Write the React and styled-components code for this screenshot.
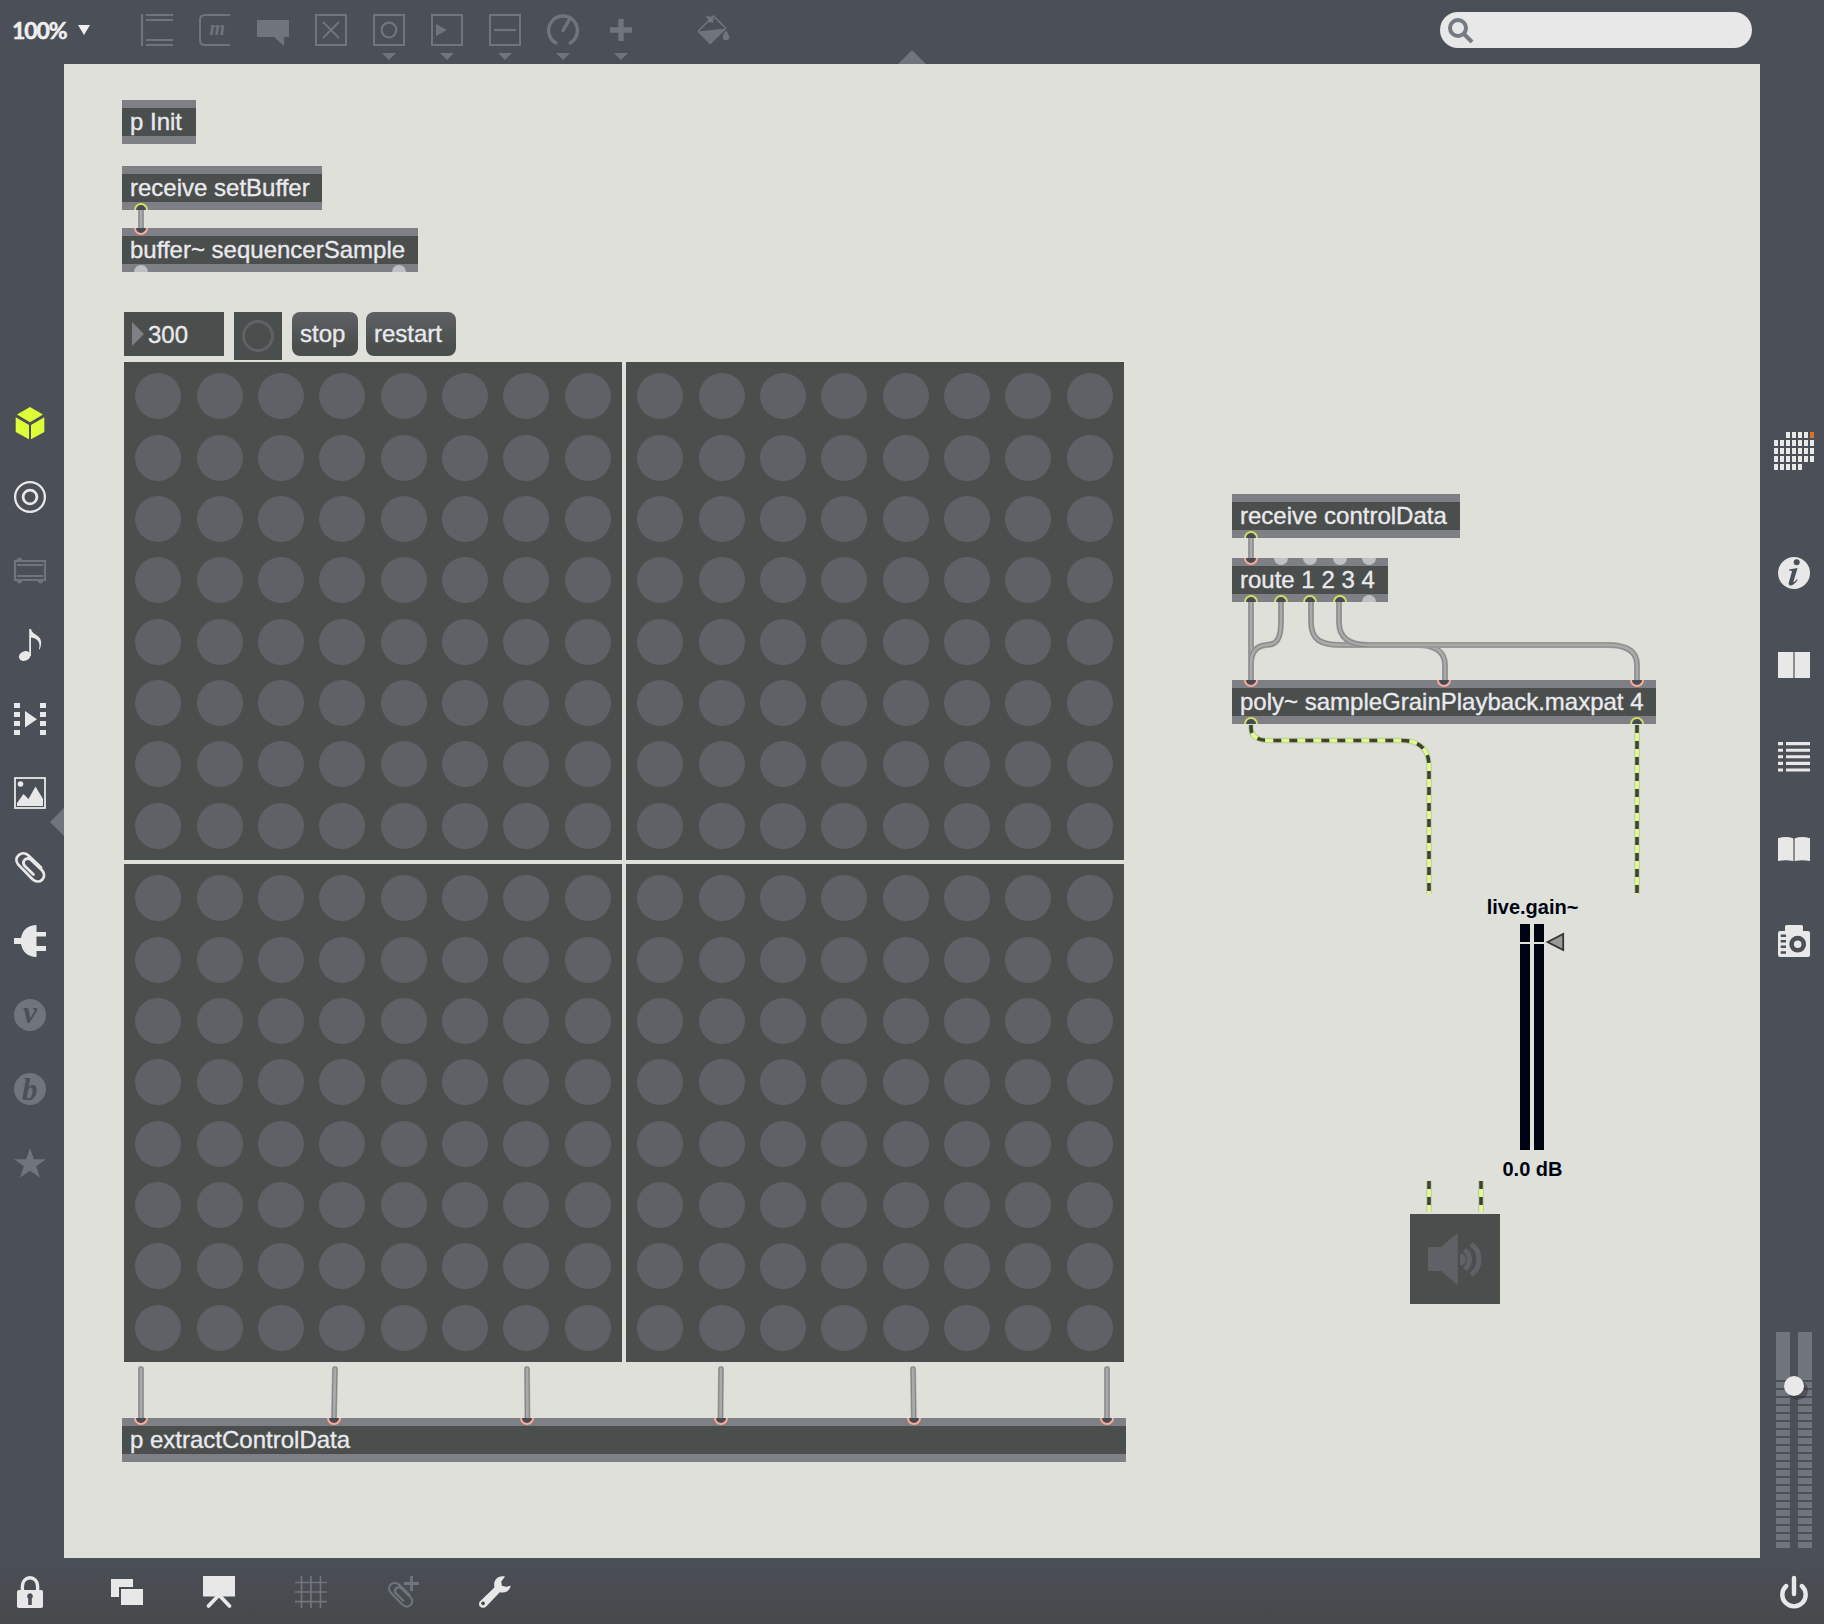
import React from "react";
import styled, { createGlobalStyle, css } from "styled-components";

const c = {
  frame: "#4b4f57",
  canvas: "#dfe0da",
  box: "#4a4e4c",
  edge: "#7f8085",
  dot: "#606166",
  text: "#e9e9ee",
  icon: "#e8e8e8",
  dim: "#70747d",
  inlet: "#ffa898",
  outlet: "#d5dc66",
  idle: "#bfc0c3",
};

const SIDE = 64;

const GlobalStyle = createGlobalStyle`
  *, *::before, *::after { box-sizing: border-box; }
  body { margin: 0; font-family: "Liberation Sans", Arial, sans-serif; }
`;

/* ---------- window frame ---------- */

const Window = styled.div`
  display: grid;
  grid-template: 64px 1494px 66px / 64px 1696px 64px;
  width: 1824px;
  height: 1624px;
  overflow: hidden;
  background: ${c.frame};
`;

const TopBar = styled.header`
  grid-column: 1 / -1;
  position: relative;
  display: flex;
  align-items: flex-start;
  padding: 12px 72px 0 12px;
`;

const Zoom = styled.div`
  display: flex;
  align-items: center;
  gap: 12px;
  width: 129px;
  height: 36px;
  color: #efefef;
  font: bold 23px/36px Lato, sans-serif;
  letter-spacing: -1.1px;
  -webkit-text-stroke: 0.5px currentColor;
`;

const Tools = styled.nav`
  display: flex;
  gap: 26px;
  padding-top: 2px;
  color: ${c.dim};
`;

const Tool = styled.span`
  display: flex;
  flex-direction: column;
  align-items: center;
  gap: 7px;
  margin-left: ${(p) => p.$offset || 0}px;
`;

const Caret = styled.i`
  width: 0;
  height: 0;
  border: ${(p) => p.$half}px solid transparent;
  border-top: ${(p) => p.$drop}px solid currentColor;
  border-bottom: 0;
`;

const Search = styled.label`
  display: flex;
  align-items: center;
  width: 312px;
  height: 36px;
  margin-left: auto;
  padding-left: 7px;
  border-radius: 18px;
  background: #e8e8e8;
  color: #757b83;
`;

const DrawerHandle = styled.i`
  position: absolute;
  background: ${c.dim};
  ${(p) =>
    p.$side === "top"
      ? css`
          left: 898px;
          bottom: 0;
          width: 28px;
          height: 14px;
          clip-path: polygon(50% 0, 100% 100%, 0 100%);
        `
      : css`
          right: 0;
          top: 744px;
          width: 14px;
          height: 28px;
          clip-path: polygon(0 50%, 100% 0, 100% 100%);
        `}
`;

const LeftBar = styled.aside`
  position: relative;
  display: flex;
  flex-direction: column;
  gap: 42px;
  padding: 343px 0 0 14px;
  color: ${c.icon};
`;

const RightBar = styled.aside`
  display: flex;
  flex-direction: column;
  align-items: center;
  padding: 368px 0 10px 4px;
  color: ${c.icon};
`;

const RightTools = styled.nav`
  display: flex;
  flex-direction: column;
  gap: 60px;
  margin-top: 87px;
`;

const BottomBar = styled.footer`
  grid-column: 1 / -1;
  display: flex;
  gap: 60px;
  padding: 18px 14px 0;
  background: linear-gradient(${c.frame}, #46494b);
  color: ${c.icon};
`;

const BottomItem = styled.span`
  display: flex;
  height: 32px;
  margin-left: ${(p) => p.$offset || 0};
  color: ${(p) => (p.$dim ? c.dim : "inherit")};
`;

const Monome = styled.div`
  display: grid;
  grid-template-columns: repeat(7, 4px);
  grid-auto-rows: 6px;
  gap: 2px;
`;

const MonomeCell = styled.i`
  background: ${(p) => p.$tone};
`;

const Volume = styled.div`
  position: relative;
  display: flex;
  gap: 8px;
  margin-top: auto;
`;

const VolumeTrack = styled.div`
  width: 14px;
  height: 216px;
  background: linear-gradient(${c.dim}, ${c.dim}) top / 100% 48px no-repeat,
    repeating-linear-gradient(${c.frame} 0 2px, ${c.dim} 2px 8px);
`;

const VolumeKnob = styled.i`
  position: absolute;
  left: 8px;
  top: 44px;
  width: 20px;
  height: 20px;
  border-radius: 50%;
  background: #e9e9e9;
  box-shadow: 4px 4px 0 rgba(45, 48, 52, 0.5);
`;

/* ---------- patcher canvas ---------- */

const Canvas = styled.main`
  position: relative;
  background: ${c.canvas};
`;

const Cords = styled.svg`
  position: absolute;
  inset: 0;
  pointer-events: none;
`;

const Node = styled.div`
  position: absolute;
  left: ${(p) => p.$x - SIDE}px;
  top: ${(p) => p.$y - SIDE}px;
`;

const ObjectBox = styled.div`
  position: relative;
  width: ${(p) => p.$w}px;
  height: 44px;
  padding: 0 8px;
  border: solid ${c.edge};
  border-width: 8px 0;
  background: ${c.box};
  color: ${c.text};
  font-size: 24px;
  line-height: 28px;
  white-space: nowrap;
  -webkit-text-stroke: 0.35px currentColor;
`;

const tones = { in: c.inlet, out: c.outlet, idle: c.idle };

const Port = styled.i`
  position: absolute;
  left: ${(p) => p.$at - 7}px;
  width: 14px;
  height: 7px;
  border: 2px solid ${(p) => tones[p.$tone]};
  background: ${(p) => (p.$tone === "idle" ? c.idle : "#454b54")};
  ${(p) =>
    p.$edge === "top"
      ? css`
          top: -8px;
          border-top: 0;
          border-radius: 0 0 7px 7px;
        `
      : css`
          bottom: -8px;
          border-bottom: 0;
          border-radius: 7px 7px 0 0;
        `}
`;

const Controls = styled.div`
  display: flex;
  align-items: flex-start;
  color: ${c.text};
  font-size: 24px;
  line-height: 43px;
  -webkit-text-stroke: 0.35px currentColor;
`;

const NumberBox = styled.div`
  display: flex;
  align-items: center;
  gap: 4px;
  width: 100px;
  height: 44px;
  padding-left: 8px;
  background: ${c.box};
`;

const NumberArrow = styled.i`
  width: 12px;
  height: 24px;
  background: ${c.edge};
  clip-path: polygon(0 0, 100% 50%, 0 100%);
`;

const Toggle = styled.div`
  display: grid;
  place-items: center;
  width: 48px;
  height: 48px;
  margin: 0 10px;
  background: ${c.box};

  &::after {
    content: "";
    width: 32px;
    height: 32px;
    border: 3px solid ${c.dot};
    border-radius: 50%;
  }
`;

const Message = styled.div`
  width: ${(p) => p.$w}px;
  height: 44px;
  margin-right: 8px;
  padding-left: 8px;
  border-radius: 8px;
  background: linear-gradient(#5f6064, ${c.box} 80%);
`;

const MatrixSet = styled.div`
  display: grid;
  grid-template-columns: 498px 498px;
  gap: 4px;
`;

const Matrix = styled.div`
  display: grid;
  grid-template: repeat(8, 1fr) / repeat(8, 1fr);
  place-items: center;
  height: 498px;
  padding: 3.75px;
  background: ${c.box};
`;

const Dot = styled.i`
  width: 46px;
  height: 46px;
  border-radius: 50%;
  background: ${c.dot};
`;

const Gain = styled.div`
  display: flex;
  flex-direction: column;
  align-items: center;
  width: 120px;
  color: #000412;
  font: bold 20px/24px "Liberation Sans", Arial, sans-serif;
`;

const GainLabel = styled.span`
  padding-left: 1px;
`;

const Meter = styled.div`
  position: relative;
  display: flex;
  gap: 4px;
  margin: 5px 0 7px;
`;

const MeterBar = styled.i`
  width: 10px;
  height: 226px;
  background: linear-gradient(#000412 18px, ${c.canvas} 18px 20px, #000412 20px);
`;

const MeterThumb = styled.svg`
  position: absolute;
  left: 25px;
  top: 7px;
`;

const Dac = styled.div`
  width: 90px;
  height: 90px;
  background: ${c.box};
`;

/* ---------- drawings ---------- */

const Glyph = ({ children, w = 32, h = 32, ...rest }) => (
  <svg width={w} height={h} viewBox={`0 0 ${w} ${h}`} fill="none" overflow="visible" {...rest}>
    {children}
  </svg>
);

const Square = () => <rect x="1" y="1" width="30" height="30" stroke="currentColor" strokeWidth="2" />;

const CLIP = "M27 16.6 14.2 4.2C7.5-1.5-1.5 6.8 4.3 13.6L18.5 28.3C25.5 34.5 34 26 28 19.3L17.2 9C12.5 5 7 10.5 10.8 15L19.5 23.6";

const toolIcons = [
  {
    art: <path d="M1 0v32M5 1h27M5 6h27M5 26h27M5 31h27" stroke="currentColor" strokeWidth="2.2" />,
  },
  {
    art: (
      <>
        <path d="M31 1H6Q1 1 1 6V26Q1 31 6 31H31" stroke="currentColor" strokeWidth="2" />
        <text x="10.5" y="21" fill="currentColor" fontFamily="Liberation Serif, serif" fontStyle="italic" fontWeight="bold" fontSize="20">m</text>
      </>
    ),
  },
  { art: <path d="M0 6H32V23H27V32L17 23H0z" fill="currentColor" /> },
  { art: <><Square /><path d="M8 8 24 24M24 8 8 24" stroke="currentColor" strokeWidth="2" /></> },
  { art: <><Square /><circle cx="16" cy="16" r="7.4" stroke="currentColor" strokeWidth="2.2" /></>, menu: true },
  { art: <><Square /><path d="M5 10 16 16 5 22z" fill="currentColor" /></>, menu: true },
  { art: <><Square /><path d="M5 16H27" stroke="currentColor" strokeWidth="2.2" /></>, menu: true },
  {
    art: <path d="M9 29A14.4 14.4 0 1 1 23 29M16 16.5 22.5 5.5" stroke="currentColor" strokeWidth="3.4" strokeLinecap="round" />,
    menu: true,
  },
  { art: <path d="M16 5V27M5 16H27" stroke="currentColor" strokeWidth="5.4" />, menu: true },
  {
    offset: 35,
    art: (
      <>
        <path d="M0 17.3 15.6 2 28 14.6" stroke="currentColor" strokeWidth="1.6" />
        <path d="M-.8 17.5 28.6 14.6 12.3 30.5zM28 16.5C30 19.5 31.3 21.5 31.3 23.2A3.3 3 0 0 1 24.7 23.2C24.7 21.5 26 19.5 28 16.5z" fill="currentColor" />
        <path d="M8.5 2 15 8.5M10 5.5 13 2.5M11 8 16 4.5" stroke="currentColor" strokeWidth="2" />
      </>
    ),
  },
];

const letterBadge = (ch, x, y) => (
  <>
    <circle cx="16" cy="16" r="16" fill={c.dim} />
    <text x={x} y={y} fill={c.frame} fontFamily="Liberation Serif, serif" fontStyle="italic" fontWeight="bold" fontSize="31">
      {ch}
    </text>
  </>
);

const leftIcons = [
  <path d="M16 0 29 7.5 16 15.2 3 7.5zM1.7 10.2 15 18V32.2L1.7 25zM30.3 10.2 17 18V32.2L30.3 25z" fill="#deff38" />,
  <g stroke="currentColor"><circle cx="16" cy="16" r="14.9" strokeWidth="2.3" /><circle cx="16" cy="16" r="6.9" strokeWidth="2.8" /></g>,
  <g stroke={c.dim} strokeWidth="2.2">
    <path d="M1 6H31V25H1zM3 10H29M3 21H29" />
    <path d="M3 5.5A2.5 2.5 0 0 1 8 5.5M3 25.5A2.5 2.5 0 0 0 8 25.5M24 25.5A2.5 2.5 0 0 0 29 25.5" fill={c.dim} strokeWidth="1" />
  </g>,
  <g fill="currentColor">
    <ellipse cx="10.7" cy="27" rx="6" ry="4.7" transform="rotate(-22 10.7 27)" />
    <path d="M15.2 0H17C17.5 3 20 4.5 23 6.5 28 9.5 28 15 25.7 20.5L25 20C26.5 15 25 9.5 17 8.5V27H15.2z" />
  </g>,
  <path d="M0 0h6v5H0zM0 9h6v5H0zM0 18h6v5H0zM0 27h6v5H0zM26 0h6v5h-6zM26 9h6v5h-6zM26 18h6v5h-6zM26 27h6v5h-6zM11 8 23 16.2 11 24.5z" fill="currentColor" />,
  <>
    <rect x="1" y="1" width="30" height="30" stroke="currentColor" strokeWidth="1.8" />
    <circle cx="6.5" cy="7" r="2.8" fill="currentColor" />
    <path d="M3 29V26L9.5 17 14.5 22 21.5 9.5 29 22V29z" fill="currentColor" />
  </>,
  <path d={CLIP} stroke="currentColor" strokeWidth="2.8" strokeLinecap="round" />,
  <path d="M0 13H7C8.5 5 14 0 22.5 0V7H32V11.5H22.5V21H32V26H22.5V32C14 32 8.5 27 7 19H0z" fill="currentColor" />,
  letterBadge("v", 9, 24),
  letterBadge("b", 8, 26.5),
  <path d="M16 1 19.8 12.2H32L22.2 19.3 26 30.6 16 23.7 6 30.6 9.8 19.3 0 12.2H12.2z" fill={c.dim} />,
];

const rightIcons = [
  <>
    <circle cx="16" cy="16" r="16" fill="currentColor" />
    <circle cx="18.7" cy="5.3" r="3" fill={c.frame} />
    <path d="M11 12.5 19.6 11 15.6 24C15.2 26 16.2 25.5 18.8 22.3L19.7 23C16 28.7 10.5 30.6 10.7 26L14 14.6Q14 13.5 11 13.6z" fill={c.frame} />
  </>,
  <>
    <path d="M0 3H15V29H0zM17 3H32V29H17z" fill="currentColor" />
    <path d="M16 3V29" stroke="#8b8d91" strokeWidth="2" />
  </>,
  <path d="M0 2.6H5M8 2.6H32M0 9.2H5M8 9.2H32M0 15.8H5M8 15.8H32M0 22.4H5M8 22.4H32M0 29H5M8 29H32" stroke="currentColor" strokeWidth="3.1" />,
  <>
    <path d="M0 5.3Q8 2.8 15 5.3V28Q8 26.5 0 28zM17 5.3Q24 2.8 32 5.3V28Q24 26.5 17 28z" fill="currentColor" />
    <path d="M16 5.5V28" stroke="#8b8d91" strokeWidth="2" />
  </>,
  <>
    <path d="M7 1.5Q7 0 8.5 0H23.5Q25 0 25 1.5V6H30Q32 6 32 8V30Q32 32 30 32H2Q0 32 0 30V8Q0 6 2 6H7z" fill="currentColor" />
    <circle cx="19.7" cy="19.2" r="6.1" stroke={c.frame} strokeWidth="4.6" />
    <path d="M2.7 10.7H8M2.7 16.2H8M2.7 21.8H8M2.7 27.4H8" stroke={c.frame} strokeWidth="2.5" />
  </>,
];

const bottomIcons = [
  {
    art: (
      <>
        <path d="M8.4 15V10a7.6 8.2 0 0 1 15.2 0v5" stroke="currentColor" strokeWidth="3.4" />
        <rect x="3" y="14" width="26" height="18" rx="1.8" fill="currentColor" />
        <path d="M16 17.3A3 3 0 0 1 17.8 22.6V29H14.2V22.6A3 3 0 0 1 16 17.3z" fill={c.frame} />
      </>
    ),
  },
  {
    offset: "5px",
    art: <path d="M0 3H22V11H8V21H0zM10 13H32V29H10z" fill="currentColor" />,
  },
  {
    art: (
      <>
        <path d="M0 0H32V20.5H0z" fill="currentColor" />
        <path d="M16 19 5.5 30M16 19 26.5 30" stroke="currentColor" strokeWidth="3.8" strokeLinecap="round" />
      </>
    ),
  },
  { dim: true, art: <path d="M6.5 0V32M16 0V32M25.5 0V32M0 6.5H32M0 16H32M0 25.7H32" stroke="currentColor" strokeWidth="1.7" /> },
  {
    dim: true,
    art: (
      <>
        <path d={CLIP} transform="translate(0 5) scale(.84)" stroke="currentColor" strokeWidth="2.5" strokeLinecap="round" />
        <path d="M24.5 0V15M17 7.5H32" stroke="currentColor" strokeWidth="2.8" />
      </>
    ),
  },
  {
    art: (
      <path
        fillRule="evenodd"
        d="M26 .6 22.3 5.5 22.9 9.8 27 10.8 31.7 9.8C30.5 15.6 25.5 17.5 20.8 16.2L7.2 30.4C3.2 34.2-2.7 29.5 1.4 25L15.4 11.4C14 4.5 18.5-1 26 .6zM4 25.5A1.9 1.9 0 1 0 4.1 25.5z"
        fill="currentColor"
      />
    ),
  },
];

/* ---------- patch data ---------- */

const objects = [
  { x: 122, y: 100, w: 74, label: "p Init" },
  { x: 122, y: 166, w: 200, label: "receive setBuffer", outs: [[19, "out"]] },
  { x: 122, y: 228, w: 296, label: "buffer~ sequencerSample", ins: [[19, "in"]], outs: [[19, "idle"], [277, "idle"]] },
  { x: 1232, y: 494, w: 228, label: "receive controlData", outs: [[19, "out"]] },
  {
    x: 1232, y: 558, w: 156, label: "route 1 2 3 4",
    ins: [[19, "in"], [48.5, "idle"], [78, "idle"], [107.5, "idle"], [137, "idle"]],
    outs: [[19, "out"], [48.5, "out"], [78, "out"], [107.5, "out"], [137, "idle"]],
  },
  {
    x: 1232, y: 680, w: 424, label: "poly~ sampleGrainPlayback.maxpat 4",
    ins: [[19, "in"], [212, "in"], [405, "in"]],
    outs: [[19, "out"], [405, "out"]],
  },
  {
    x: 122, y: 1418, w: 1004, label: "p extractControlData",
    ins: [19, 212, 405.3, 598.6, 791.8, 985].map((at) => [at, "in"]),
  },
];

const controlCords = [
  "M141 209V229",
  "M1251 537V559",
  "M1251 601V681",
  "M1281 601V622C1281 640 1276 645 1266 645C1256 646 1251 652 1251 664V681",
  "M1311 601V622C1311 640 1321 645 1341 645H1417C1437 645 1445 653 1445 665V681",
  "M1339 601V622C1339 638 1349 645 1369 645H1608C1629 645 1637 653 1637 665V681",
  "M141 1369V1418",
  "M335 1369 334 1418",
  "M527 1369 527.4 1418",
  "M721 1369 720.5 1418",
  "M913 1369 913.8 1418",
  "M1107 1369V1418",
];

const signalCords = [
  "M1251 725V728C1251 736 1257 740.5 1269 740.5H1402C1420 740.5 1429 750 1429 766V894",
  "M1637 725V894",
  "M1429 1181V1212",
  "M1481 1181V1212",
];

const range = (n) => Array.from({ length: n }, (_, i) => i);

const monomeTone = (i) => {
  if (i < 2 || i > 32) return "transparent";
  return i === 6 ? "#dc7324" : c.icon;
};

function PatchObject({ x, y, w, label, ins = [], outs = [] }) {
  return (
    <Node $x={x} $y={y}>
      <ObjectBox $w={w}>
        {label}
        {ins.map(([at, tone]) => <Port key={`i${at}`} $at={at} $tone={tone} $edge="top" />)}
        {outs.map(([at, tone]) => <Port key={`o${at}`} $at={at} $tone={tone} $edge="bottom" />)}
      </ObjectBox>
    </Node>
  );
}

function PatchCords() {
  return (
    <Cords width="1696" height="1494" viewBox="64 64 1696 1494" fill="none">
      {controlCords.map((d) => (
        <g key={d} strokeLinecap="round">
          <path d={d} stroke="#a2a3a0" strokeWidth="6" />
          <path d={d} stroke="#828282" strokeWidth="4.6" />
          <path d={d} stroke="#aaaaaa" strokeWidth="2.8" />
        </g>
      ))}
      {signalCords.map((d) => (
        <g key={d}>
          <path d={d} stroke="#bfc0b8" strokeWidth="5.4" />
          <path d={d} stroke="#dcff86" strokeWidth="3.6" />
          <path d={d} stroke="#3e4426" strokeWidth="3.6" strokeDasharray="8 8" />
        </g>
      ))}
    </Cords>
  );
}

export default function App() {
  return (
    <>
      <GlobalStyle />
      <Window>
        <TopBar>
          <Zoom>
            100%
            <Caret $half={6} $drop={10} />
          </Zoom>
          <Tools>
            {toolIcons.map(({ art, menu, offset }, i) => (
              <Tool key={i} $offset={offset}>
                <Glyph>{art}</Glyph>
                {menu && <Caret $half={7} $drop={7} />}
              </Tool>
            ))}
          </Tools>
          <Search>
            <Glyph w={28} h={28}>
              <circle cx="11" cy="12" r="8" stroke="currentColor" strokeWidth="4" />
              <path d="M16.5 17.5 25 26" stroke="currentColor" strokeWidth="4" />
            </Glyph>
          </Search>
          <DrawerHandle $side="top" />
        </TopBar>

        <LeftBar>
          {leftIcons.map((art, i) => <Glyph key={i}>{art}</Glyph>)}
          <DrawerHandle $side="left" />
        </LeftBar>

        <Canvas>
          <PatchCords />
          {objects.map((o) => <PatchObject key={o.label} {...o} />)}

          <Node $x={124} $y={312}>
            <Controls>
              <NumberBox>
                <NumberArrow />
                300
              </NumberBox>
              <Toggle />
              <Message $w={66}>stop</Message>
              <Message $w={90}>restart</Message>
            </Controls>
          </Node>

          <Node $x={124} $y={362}>
            <MatrixSet>
              {range(4).map((m) => (
                <Matrix key={m}>
                  {range(64).map((d) => <Dot key={d} />)}
                </Matrix>
              ))}
            </MatrixSet>
          </Node>

          <Node $x={1472} $y={895}>
            <Gain>
              <GainLabel>live.gain~</GainLabel>
              <Meter>
                <MeterBar />
                <MeterBar />
                <MeterThumb width="20" height="22" viewBox="0 0 20 22">
                  <path d="M2.5 11 18.2 3V19z" fill="#999999" stroke="#333333" strokeWidth="1.8" />
                </MeterThumb>
              </Meter>
              <GainLabel>0.0 dB</GainLabel>
            </Gain>
          </Node>

          <Node $x={1410} $y={1214}>
            <Dac>
              <Glyph w={90} h={90}>
                <path d="M20 33H31L47.7 19V71L31 57H20Q18 57 18 55V35Q18 33 20 33z" fill={c.dot} />
                <path d="M50 39.5A6 6 0 0 1 50 51.5z" fill={c.dot} />
                <path d="M54.5 36A11.5 11.5 0 0 1 54.5 55M61 30A19 19 0 0 1 61 61" stroke={c.dot} strokeWidth="5" />
              </Glyph>
            </Dac>
          </Node>
        </Canvas>

        <RightBar>
          <Monome>
            {range(33).map((i) => <MonomeCell key={i} $tone={monomeTone(i)} />)}
          </Monome>
          <RightTools>
            {rightIcons.map((art, i) => <Glyph key={i}>{art}</Glyph>)}
          </RightTools>
          <Volume>
            <VolumeTrack />
            <VolumeTrack />
            <VolumeKnob />
          </Volume>
        </RightBar>

        <BottomBar>
          {bottomIcons.map(({ art, dim, offset }, i) => (
            <BottomItem key={i} $dim={dim} $offset={offset}>
              <Glyph>{art}</Glyph>
            </BottomItem>
          ))}
          <BottomItem $offset="auto">
            <Glyph>
              <path d="M16 2V18" stroke="currentColor" strokeWidth="4.4" strokeLinecap="round" />
              <path d="M8.2 10A11.7 11.7 0 1 0 23.8 10" stroke="currentColor" strokeWidth="4.4" strokeLinecap="round" />
            </Glyph>
          </BottomItem>
        </BottomBar>
      </Window>
    </>
  );
}
